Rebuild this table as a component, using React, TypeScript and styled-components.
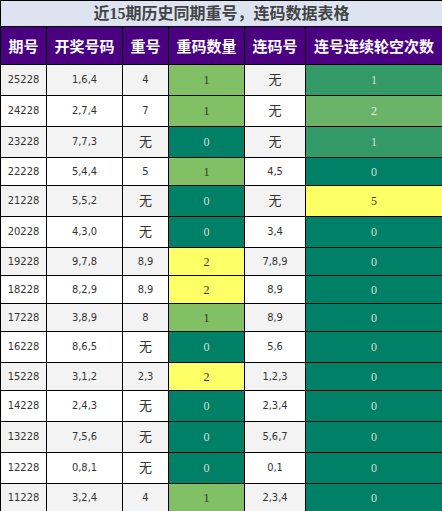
import { FC } from "react";
import styled, { createGlobalStyle } from "styled-components";

type Row = [string, string, string, number, string, number];

const rows: Row[] = [
  ["25228", "1,6,4", "4", 1, "无", 1],
  ["24228", "2,7,4", "7", 1, "无", 2],
  ["23228", "7,7,3", "无", 0, "无", 1],
  ["22228", "5,4,4", "5", 1, "4,5", 0],
  ["21228", "5,5,2", "无", 0, "无", 5],
  ["20228", "4,3,0", "无", 0, "3,4", 0],
  ["19228", "9,7,8", "8,9", 2, "7,8,9", 0],
  ["18228", "8,2,9", "8,9", 2, "8,9", 0],
  ["17228", "3,8,9", "8", 1, "8,9", 0],
  ["16228", "8,6,5", "无", 0, "5,6", 0],
  ["15228", "3,1,2", "2,3", 2, "1,2,3", 0],
  ["14228", "2,4,3", "无", 0, "2,3,4", 0],
  ["13228", "7,5,6", "无", 0, "5,6,7", 0],
  ["12228", "0,8,1", "无", 0, "0,1", 0],
  ["11228", "3,2,4", "4", 1, "2,3,4", 0],
];

const heads = ["期号", "开奖号码", "重号", "重码数量", "连码号", "连号连续轮空次数"];
const widths = [46, 76, 46, 76, 61, 137];

// 重码数量
const repeatColor: Record<number, [string, string]> = {
  0: ["#008066", "#dcdcdc"],
  1: ["#82c066", "#333333"],
  2: ["#ffff66", "#333333"],
};

// 连号连续轮空次数
const missColor: Record<number, [string, string]> = {
  0: ["#008066", "#dcdcdc"],
  1: ["#339966", "#dcdcdc"],
  2: ["#6ab46a", "#e8e8e8"],
  5: ["#ffff66", "#333333"],
};

const GlobalStyle = createGlobalStyle`
  body {
    margin: 0;
    background: #ffffff;
  }
`;

export default function App() {
  return (
    <>
      <GlobalStyle />
      <StTable>
        <colgroup>
          {widths.map((w, i) => (
            <col key={i} style={{ width: w }} />
          ))}
        </colgroup>
        <thead>
          <tr>
            <StTitle colSpan={6}>近15期历史同期重号，连码数据表格</StTitle>
          </tr>
          <tr>
            {heads.map((h) => (
              <StHead key={h}>{h}</StHead>
            ))}
          </tr>
        </thead>
        <tbody>
          {rows.map((r, i) => (
            <DataRow key={r[0]} row={r} odd={i % 2 === 0} />
          ))}
        </tbody>
      </StTable>
    </>
  );
}

const DataRow: FC<{ row: Row; odd: boolean }> = ({ row, odd }) => {
  const [issue, draw, repeat, repeatCount, link, miss] = row;
  const tall = row.includes("无");
  const [rBg, rFg] = repeatColor[repeatCount];
  const [mBg, mFg] = missColor[miss];

  return (
    <StRow $odd={odd} $tall={tall}>
      <StCell>{issue}</StCell>
      <StCell>{draw}</StCell>
      <StCell $cjk={repeat === "无"}>{repeat}</StCell>
      <StColorCell $bg={rBg} $fg={rFg}>
        {repeatCount}
      </StColorCell>
      <StCell $cjk={link === "无"}>{link}</StCell>
      <StColorCell $bg={mBg} $fg={mFg}>
        {miss}
      </StColorCell>
    </StRow>
  );
};

const StTable = styled.table`
  width: 442px;
  border-collapse: collapse;
  table-layout: fixed;
`;

const StTitle = styled.th`
  height: 25px;
  padding: 0;
  border: 1px solid #000;
  background: #dde3f1;
  color: #444444;
  font-family: "Liberation Serif", "Noto Sans CJK SC", serif;
  font-size: 16px;
  font-weight: bold;
  text-align: center;
  line-height: 22px;
`;

const StHead = styled.th`
  height: 37px;
  padding: 0;
  border: 1px solid #000;
  background: #4b0082;
  color: #ffffff;
  font-family: "Noto Sans CJK SC", sans-serif;
  font-size: 15px;
  font-weight: bold;
  text-align: center;
  white-space: nowrap;
`;

const StRow = styled.tr<{ $odd: boolean; $tall: boolean }>`
  height: ${(p) => (p.$tall ? 31 : 28)}px;
  background: ${(p) => (p.$odd ? "#f3f3f3" : "#ffffff")};
`;

const StCell = styled.td<{ $cjk?: boolean }>`
  padding: 0;
  border: 1px solid #000;
  color: #333333;
  font-family: "DejaVu Sans Condensed", "DejaVu Sans", "Noto Sans CJK SC", sans-serif;
  font-size: ${(p) => (p.$cjk ? 13 : 11)}px;
  line-height: 14px;
  text-align: center;
`;

const StColorCell = styled.td<{ $bg: string; $fg: string }>`
  padding: 0;
  border: 1px solid #000;
  background: ${(p) => p.$bg};
  color: ${(p) => p.$fg};
  font-family: "Liberation Serif", serif;
  font-size: 12px;
  line-height: 14px;
  text-align: center;
`;
